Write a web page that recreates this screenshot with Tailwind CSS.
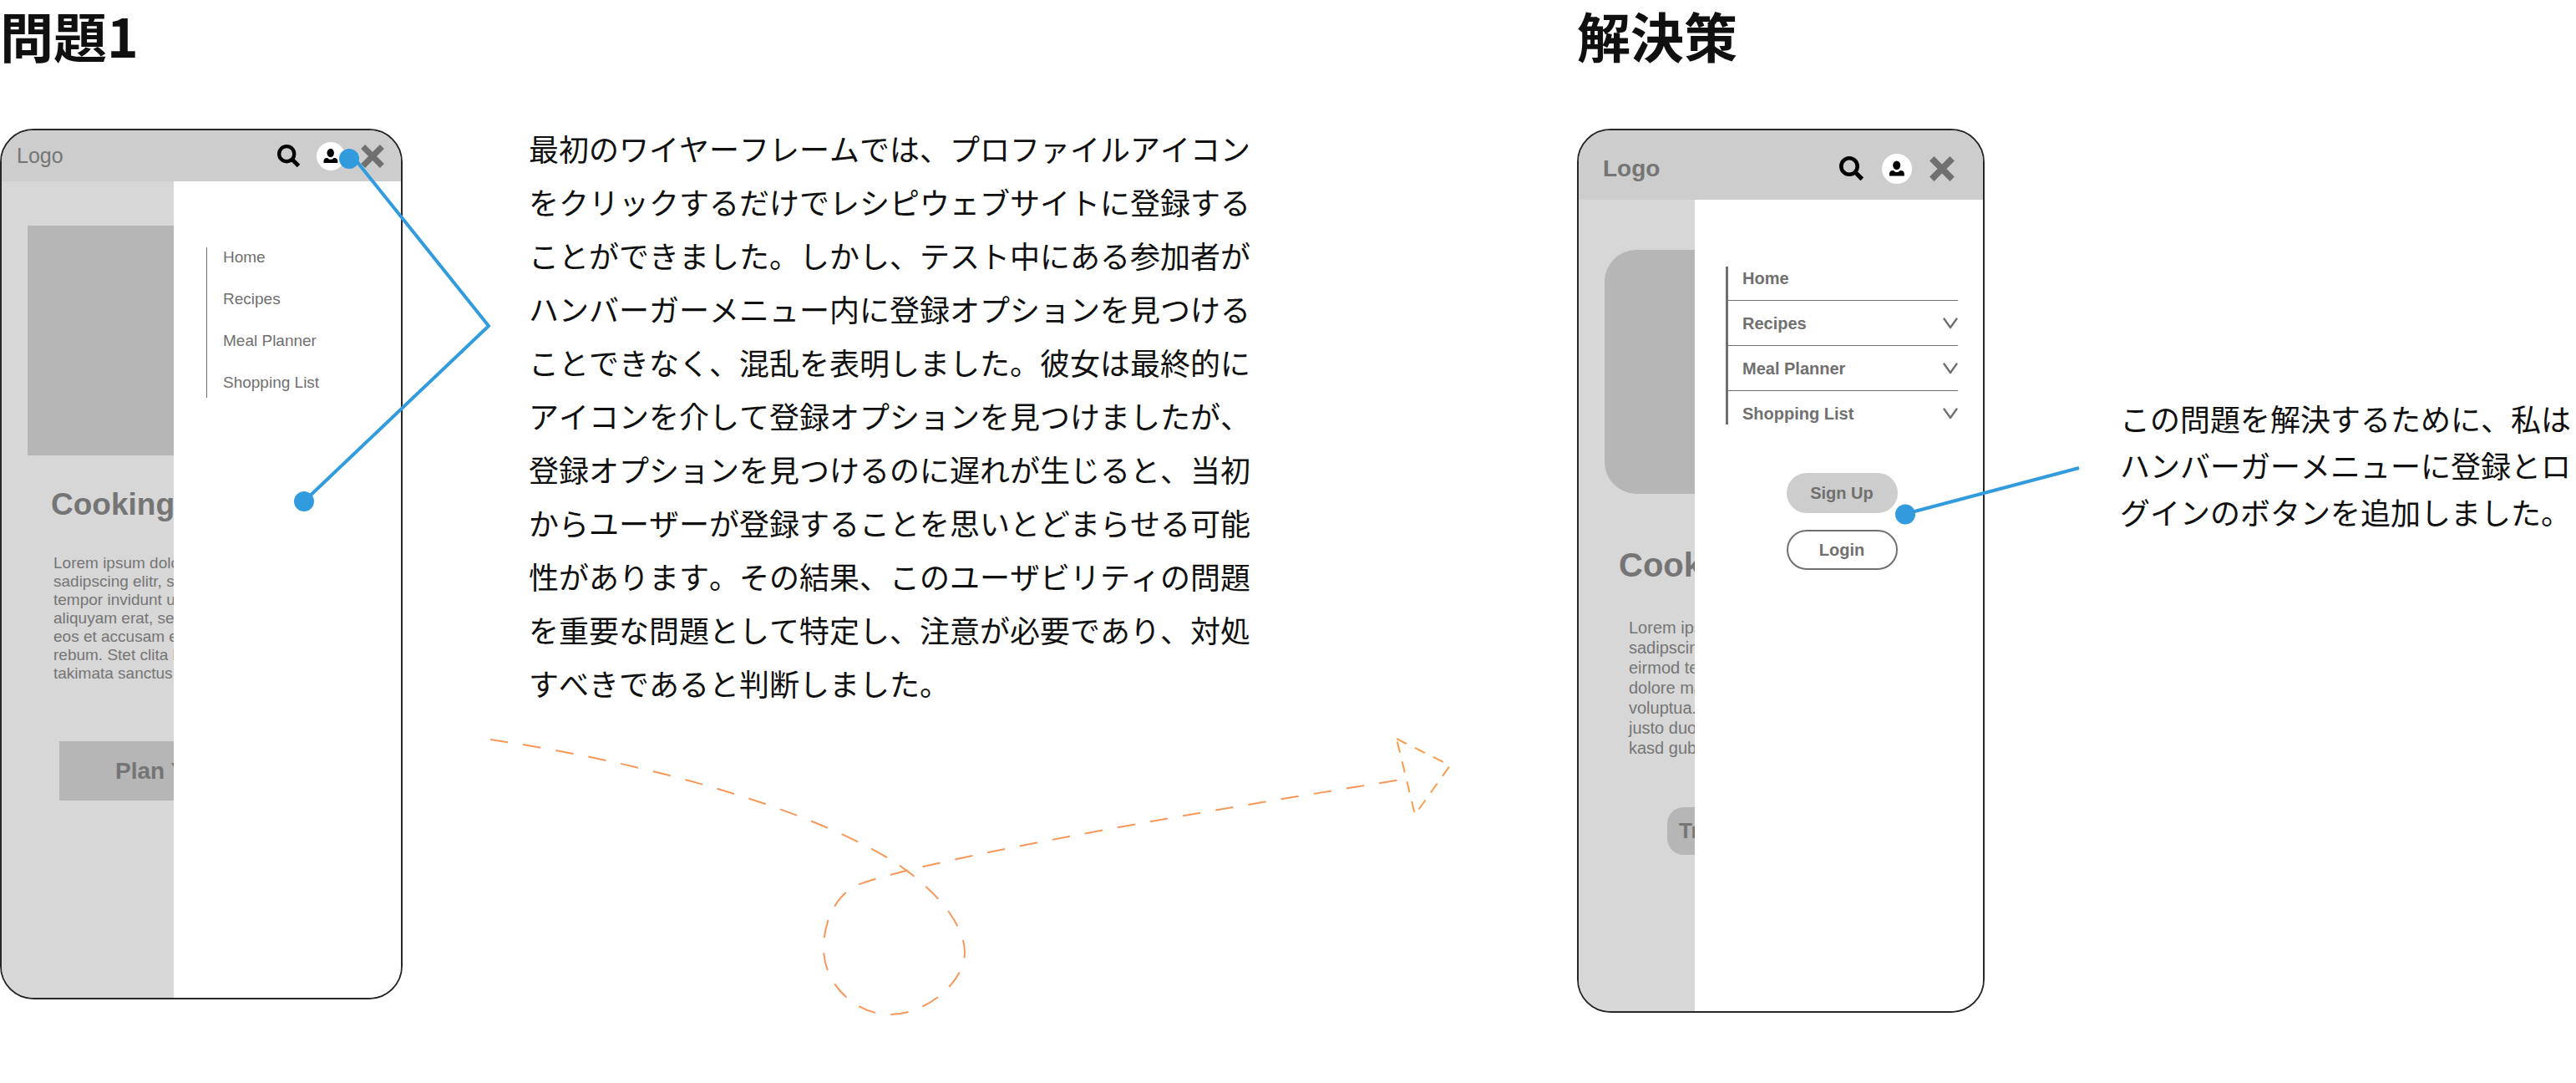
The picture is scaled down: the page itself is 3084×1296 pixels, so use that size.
<!DOCTYPE html>
<html lang="ja">
<head>
<meta charset="utf-8">
<meta name="viewport" content="width=device-width, initial-scale=1">
<title>問題1と解決策</title>
<script src="https://cdn.jsdelivr.net/npm/@tailwindcss/browser@4"></script>
</head>
<body class="bg-white text-[#101010] font-['Noto_Sans_CJK_JP',sans-serif]">
<svg class="hidden" aria-hidden="true">
  <symbol id="search" viewBox="0 0 30 30">
    <circle cx="12" cy="12" r="9.7" fill="none" stroke="#000" stroke-width="4.6"/>
    <path d="M19.5 19.5 27.3 27.3" stroke="#000" stroke-width="5.2"/>
  </symbol>
  <symbol id="profile" viewBox="0 0 36 36">
    <circle cx="18" cy="18" r="18" fill="#fff"/>
    <ellipse cx="17.7" cy="13.8" rx="4.5" ry="5.4" fill="#000"/>
    <path d="M9 26.500v-2.500c0-2.500 1.600-4 4.200-4h.8c1 1.400 2.300 2 3.900 2s2.900-.6 3.900-2h.8c2.600 0 4.200 1.500 4.200 4v2.500z" fill="#000"/>
  </symbol>
  <symbol id="close" viewBox="0 0 30 30">
    <path d="M2.8 2.8 27.2 27.2M27.2 2.8 2.8 27.2" stroke="#707070" stroke-width="7.6"/>
  </symbol>
  <symbol id="chevron" viewBox="0 0 18 14">
    <path d="M1.5 1.5 9 12 16.5 1.5" fill="none" stroke="#707070" stroke-width="2.4" stroke-linecap="round" stroke-linejoin="round"/>
  </symbol>
</svg>

<main class="grid grid-cols-[minmax(0,1888fr)_minmax(0,1196fr)]">
  <section>
    <h1 class="text-[64px] leading-[82px] font-bold">問題1</h1>
    <div class="flex items-start pt-[63px]">
      <!-- First wireframe -->
      <div class="relative mt-[9px] w-[482px] shrink-0 font-['Liberation_Sans',sans-serif] text-[#757575]">
        <div class="overflow-hidden rounded-[40px] border-2 border-[#2a2625]">
          <header class="flex h-[61px] items-center justify-between bg-[#cdcdcd] pr-5 pl-[18px]">
            <a href="#" class="text-[25px]">Logo</a>
            <div class="flex items-center gap-[19px]">
              <button type="button" aria-label="Search"><svg class="block size-7"><use href="#search"/></svg></button>
              <button type="button" aria-label="Profile"><svg class="block size-[34px]"><use href="#profile"/></svg></button>
              <button type="button" aria-label="Close menu"><svg class="block size-7"><use href="#close"/></svg></button>
            </div>
          </header>
          <div class="flex">
            <div class="w-[206px] shrink-0 overflow-hidden bg-[#d7d7d7] pb-[236px] whitespace-nowrap">
              <div class="mt-[53px] ml-[31px] h-[275px] bg-[#b6b6b6]"></div>
              <h2 class="mt-[39px] ml-[59px] text-[37px] leading-10 font-bold">Cooking</h2>
              <p class="mt-[39px] ml-[62px] text-[19px] leading-[22px]">Lorem ipsum dolor<br>sadipscing elitr, sed<br>tempor invidunt ut<br>aliquyam erat, sed<br>eos et accusam et<br>rebum. Stet clita kasd<br>takimata sanctus</p>
              <button type="button" class="mt-[70px] ml-[69px] block h-[71px] w-[300px] bg-[#b6b6b6] pl-[67px] text-left text-[28px] font-bold">Plan Your Meal</button>
            </div>
            <nav class="flex-1 bg-white pt-[79px] pl-[39px]">
              <ul class="flex flex-col gap-[26px] border-l border-[#707070] pb-1.5 pl-[19px] text-[19px] leading-6 text-[#707070]">
                <li><a href="#">Home</a></li>
                <li><a href="#">Recipes</a></li>
                <li><a href="#">Meal Planner</a></li>
                <li><a href="#">Shopping List</a></li>
              </ul>
            </nav>
          </div>
        </div>
        <!-- Callout from the profile icon and the empty menu area -->
        <svg class="pointer-events-none absolute top-0 left-0" width="600" height="480" viewBox="0 154 600 480" fill="none" aria-hidden="true">
          <path d="M427 193 585 390 364 600" stroke="#329bde" stroke-width="4"/>
          <circle cx="418" cy="190" r="12" fill="#329bde"/>
          <circle cx="364" cy="600" r="12" fill="#329bde"/>
        </svg>
      </div>

      <div class="min-w-0 flex-1">
        <p class="ml-[151px] max-w-[870px] text-4xl leading-[64px] font-normal [font-kerning:none]">最初のワイヤーフレームでは、プロファイルアイコンをクリックするだけでレシピウェブサイトに登録することができました。しかし、テスト中にある参加者がハンバーガーメニュー内に登録オプションを見つけることできなく、混乱を表明しました。彼女は最終的にアイコンを介して登録オプションを見つけましたが、登録オプションを見つけるのに遅れが生じると、当初からユーザーが登録することを思いとどまらせる可能性があります。その結果、このユーザビリティの問題を重要な問題として特定し、注意が必要であり、対処すべきであると判断しました。</p>
        <svg class="mt-[26px] ml-[100px] block" width="1160" height="345" viewBox="582 875 1160 345" fill="none" aria-hidden="true">
          <path d="M587 885C760 910 955 962 1065 1028C1112 1057 1155 1102 1155 1140C1155 1176 1108 1214 1066 1214C1022 1214 986 1176 986 1135C986 1100 1003 1065 1035 1056C1120 1028 1380 980 1684 932" stroke="#f7975a" stroke-width="2" stroke-dasharray="21.5 18.2"/>
          <path d="M1672 884 1736 916 1694 975z" stroke="#fa9c4b" stroke-width="2" stroke-dasharray="13.5 11"/>
        </svg>
      </div>
    </div>
  </section>

  <section>
    <h1 class="text-[64px] leading-[82px] font-bold">解決策</h1>
    <div class="flex items-start pt-[72px]">
      <!-- Revised wireframe -->
      <div class="relative w-[488px] shrink-0 font-['Liberation_Sans',sans-serif] text-[#757575]">
        <div class="overflow-hidden rounded-[40px] border-2 border-[#2a2625]">
          <header class="flex h-[83px] items-center justify-between bg-[#cdcdcd] pt-[9px] pr-[34px] pl-[29px]">
            <a href="#" class="text-[28px] font-bold">Logo</a>
            <div class="flex items-center gap-[21px]">
              <button type="button" aria-label="Search"><svg class="block size-[30px]"><use href="#search"/></svg></button>
              <button type="button" aria-label="Profile"><svg class="block size-9"><use href="#profile"/></svg></button>
              <button type="button" aria-label="Close menu"><svg class="block size-[30px]"><use href="#close"/></svg></button>
            </div>
          </header>
          <div class="flex">
            <div class="w-[139px] shrink-0 overflow-hidden bg-[#d7d7d7] pb-[187px] whitespace-nowrap">
              <div class="mt-[60px] ml-[31px] h-[292px] rounded-l-[38px] bg-[#b6b6b6]"></div>
              <h2 class="mt-[63px] ml-12 text-[40px] leading-11 font-bold">Cooking</h2>
              <p class="mt-[41px] ml-[60px] text-xl leading-6">Lorem ipsum<br>sadipscing<br>eirmod tempor<br>dolore magna<br>voluptua. At<br>justo duo<br>kasd gubergren</p>
              <button type="button" class="mt-[59px] ml-[106px] block h-[57px] w-[220px] rounded-[20px] bg-[#b6b6b6] pl-3.5 text-left text-[26px] font-bold">Try Now</button>
            </div>
            <nav class="flex-1 bg-white pt-20 pr-[30px] pl-[37px] text-xl leading-6 font-bold text-[#707070]">
              <ul class="border-l-3 border-[#707070]">
                <li class="h-[41px] border-b border-[#707070] pb-[13px] pl-[17px]"><a href="#" class="flex h-full items-center">Home</a></li>
                <li class="h-[54px] border-b border-[#707070] pl-[17px]"><button type="button" class="flex h-full w-full items-center justify-between">Recipes<svg class="h-3.5 w-[18px]"><use href="#chevron"/></svg></button></li>
                <li class="h-[54px] border-b border-[#707070] pl-[17px]"><button type="button" class="flex h-full w-full items-center justify-between">Meal Planner<svg class="h-3.5 w-[18px]"><use href="#chevron"/></svg></button></li>
                <li class="h-10 pt-[13px] pl-[17px]"><button type="button" class="flex h-full w-full items-center justify-between">Shopping List<svg class="h-3.5 w-[18px]"><use href="#chevron"/></svg></button></li>
              </ul>
              <div class="mt-[58px] flex flex-col items-center gap-5">
                <button type="button" class="h-12 w-[133px] rounded-full bg-[#cdcdcd]">Sign Up</button>
                <button type="button" class="h-12 w-[133px] rounded-full border-2 border-[#707070] bg-white">Login</button>
              </div>
            </nav>
          </div>
        </div>
        <!-- Callout from the new buttons -->
        <svg class="pointer-events-none absolute top-0 left-0" width="610" height="480" viewBox="1888 154 610 480" fill="none" aria-hidden="true">
          <path d="M2281 615 2489 560" stroke="#329bde" stroke-width="4"/>
          <circle cx="2281" cy="615.5" r="12" fill="#329bde"/>
        </svg>
      </div>
      <p class="mt-[318px] ml-[162px] min-w-0 flex-1 text-4xl leading-14 font-normal [font-kerning:none]">この問題を解決するために、私はハンバーガーメニューに登録とログインのボタンを追加しました。</p>
    </div>
  </section>
</main>
</body>
</html>
